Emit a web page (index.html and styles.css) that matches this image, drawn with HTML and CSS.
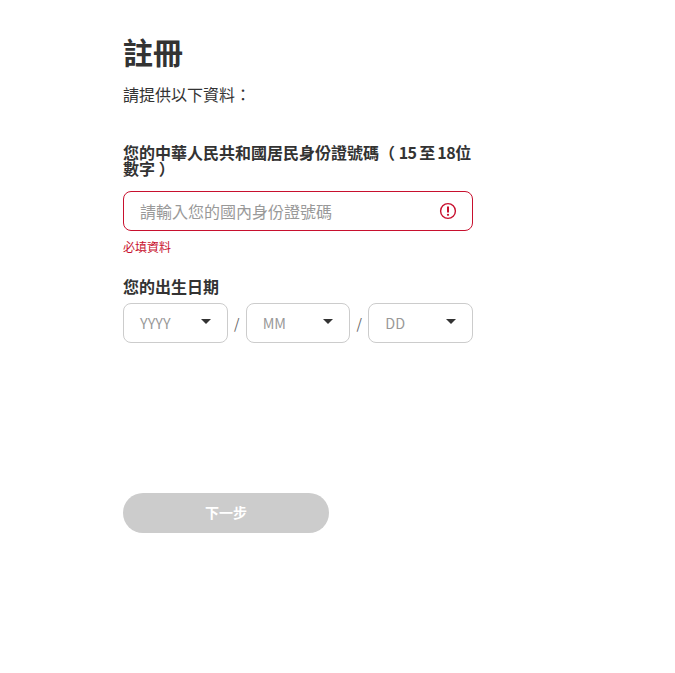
FILE: index.html
```html
<!DOCTYPE html>
<html lang="zh-Hant">
<head>
<meta charset="utf-8">
<title>註冊</title>
<link rel="stylesheet" href="styles.css">
</head>
<body>
<main class="form">
  <h1 class="title">註冊</h1>
  <p class="intro">請提供以下資料：</p>
  <div class="field field-id">
    <label class="label label-tight">您的中華人民共和國居民身份證號碼（ <span class="num">15 至 18</span>位數字 ）</label>
    <div class="box box-error">
      <span class="placeholder">請輸入您的國內身份證號碼</span>
      <svg class="alert" viewBox="0 0 18 18" width="18" height="18" aria-hidden="true">
        <circle cx="9" cy="9" r="7.4" fill="none" stroke="#c8102e" stroke-width="1.4"/>
        <path d="M9 4.6v5.8" stroke="#c8102e" stroke-width="2" fill="none"/>
        <circle cx="9" cy="12.8" r="1.1" fill="#c8102e"/>
      </svg>
    </div>
    <p class="error">必填資料</p>
  </div>
  <div class="field field-dob">
    <label class="label">您的出生日期</label>
    <div class="date-row">
      <div class="box select"><span class="placeholder small">YYYY</span><i class="caret"></i></div>
      <span class="sep">/</span>
      <div class="box select"><span class="placeholder small">MM</span><i class="caret"></i></div>
      <span class="sep">/</span>
      <div class="box select"><span class="placeholder small">DD</span><i class="caret"></i></div>
    </div>
  </div>
  <button class="next" type="button">下一步</button>
</main>
</body>
</html>
```
FILE: styles.css
```css
* { box-sizing: border-box; }
html, body { margin: 0; padding: 0; background: #fff; }
body {
  font-family: "Noto Sans CJK TC", "Noto Sans", sans-serif;
  color: #333;
}
.form {
  width: 350px;
  margin-left: 123px;
  padding-top: 29px;
}
.title {
  margin: 0;
  font-size: 30px;
  line-height: 44px;
  font-weight: 700;
  color: #333;
}
.intro {
  margin: 9px 0 0;
  font-size: 16px;
  line-height: 24px;
  color: #333;
}
.field-id { margin-top: 38px; }
.field-dob { margin-top: 18px; }
.label {
  display: block;
  font-size: 16px;
  line-height: 24px;
  font-weight: 700;
  color: #333;
}
.label-tight { line-height: 16px; margin-bottom: 15px; }
.num { letter-spacing: -0.5px; word-spacing: -0.5px; }
.box {
  display: flex;
  align-items: center;
  height: 40px;
  border: 1px solid #ccc;
  border-radius: 8px;
  background: #fff;
}
.box-error {
  justify-content: space-between;
  border-color: #c8102e;
  padding: 0 15px 0 16px;
}
.placeholder {
  font-size: 16px;
  color: #999;
}
.alert { display: block; }
.error {
  margin: 7px 0 0;
  font-size: 12px;
  line-height: 18px;
  color: #c8102e;
}
.date-row {
  display: flex;
  align-items: center;
  margin-top: 5px;
}
.select {
  flex: 1 1 0;
  justify-content: space-between;
  padding: 0 16px 2px;
}
.small { font-size: 14.4px; }
.caret {
  width: 0;
  height: 0;
  border-left: 5px solid transparent;
  border-right: 5px solid transparent;
  border-top: 5px solid #333;
  margin-top: -1px;
}
.sep {
  width: 18px;
  text-align: center;
  font-size: 14px;
  color: #666;
}
.next {
  display: block;
  width: 206px;
  height: 40px;
  margin-top: 150px;
  padding: 0 0 2px;
  border: 0;
  border-radius: 20px;
  background: #ccc;
  color: #fff;
  font-family: inherit;
  font-size: 14px;
  font-weight: 700;
}
```
